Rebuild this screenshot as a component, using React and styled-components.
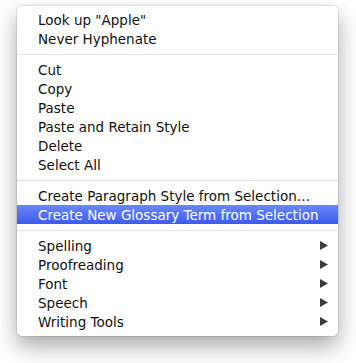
import React from "react";
import styled, { createGlobalStyle } from "styled-components";

const Global = createGlobalStyle`
  html, body { margin: 0; padding: 0; background: #fff; }
  body { font-family: "DejaVu Sans", "Liberation Sans", sans-serif; }
`;

const Page = styled.div`
  width: 356px;
  height: 363px;
  padding: 6px 0 0 17px;
  box-sizing: border-box;
`;

const Menu = styled.div`
  width: 321px;
  box-sizing: border-box;
  padding: 4px 0 5px;
  background: #fff;
  border-radius: 5px;
  box-shadow: 0 0 0 1px rgba(0, 0, 0, 0.08), 0 10px 22px rgba(0, 0, 0, 0.35);
  display: flex;
  flex-direction: column;
`;

const Item = styled.div`
  height: 19px;
  display: flex;
  align-items: center;
  justify-content: space-between;
  padding: 0 10px 0 21px;
  font-size: 13.5px;
  color: ${(p) => (p.$active ? "#fff" : "#111")};
  background: ${(p) =>
    p.$active ? "linear-gradient(#6b87f6, #3b5bf0)" : "transparent"};
  white-space: nowrap;
`;

const Separator = styled.div`
  height: 12px;
  display: flex;
  align-items: center;
  &::after {
    content: "";
    flex: 1;
    height: 1px;
    background: #e1e1e1;
  }
`;

const Arrow = styled.svg`
  width: 8px;
  height: 9px;
  flex: none;
`;

const SubArrow = () => (
  <Arrow viewBox="0 0 8 9">
    <path d="M0 0 L8 4.5 L0 9 Z" fill="#3c3c3c" />
  </Arrow>
);

const groups = [
  [{ label: 'Look up "Apple"' }, { label: "Never Hyphenate" }],
  [
    { label: "Cut" },
    { label: "Copy" },
    { label: "Paste" },
    { label: "Paste and Retain Style" },
    { label: "Delete" },
    { label: "Select All" },
  ],
  [
    { label: "Create Paragraph Style from Selection…" },
    { label: "Create New Glossary Term from Selection", active: true },
  ],
  [
    { label: "Spelling", sub: true },
    { label: "Proofreading", sub: true },
    { label: "Font", sub: true },
    { label: "Speech", sub: true },
    { label: "Writing Tools", sub: true },
  ],
];

export default function App() {
  return (
    <>
      <Global />
      <Page>
        <Menu>
          {groups.map((g, gi) => (
            <React.Fragment key={gi}>
              {gi > 0 && <Separator />}
              {g.map((it) => (
                <Item key={it.label} $active={it.active}>
                  <span>{it.label}</span>
                  {it.sub && <SubArrow />}
                </Item>
              ))}
            </React.Fragment>
          ))}
        </Menu>
      </Page>
    </>
  );
}
